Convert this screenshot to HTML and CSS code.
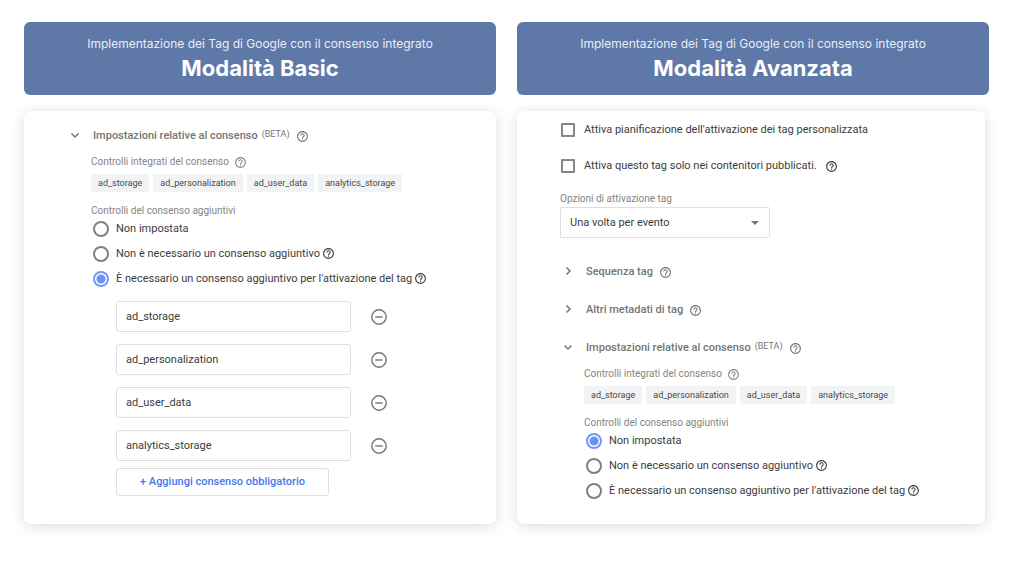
FILE: index.html
```html
<!DOCTYPE html>
<html lang="it">
<head>
<meta charset="utf-8">
<title>Modalità Basic e Modalità Avanzata</title>
<link rel="stylesheet" href="styles.css">
</head>
<body>
<svg width="0" height="0" class="sprite" aria-hidden="true">
  <symbol id="help" viewBox="0 0 24 24"><path fill="currentColor" d="M11 18h2v-2h-2v2zm1-16C6.480 2 2 6.480 2 12s4.480 10 10 10 10-4.480 10-10S17.520 2 12 2zm0 18c-4.410 0-8-3.590-8-8s3.590-8 8-8 8 3.590 8 8-3.590 8-8 8zm0-14c-2.210 0-4 1.790-4 4h2c0-1.100.9-2 2-2s2 .9 2 2c0 2-3 1.750-3 5h2c0-2.250 3-2.500 3-5 0-2.210-1.790-4-4-4z"/></symbol>
  <symbol id="down" viewBox="0 0 16 16"><path fill="none" stroke="currentColor" stroke-width="1.500" d="M4.500 5.500 8 9 11.500 5.500"/></symbol>
  <symbol id="right" viewBox="0 0 16 16"><path fill="none" stroke="currentColor" stroke-width="1.500" d="M6.500 3.500 10 7 6.500 10.500"/></symbol>
  <symbol id="minus" viewBox="0 0 16 16"><circle cx="8" cy="8" r="7.200" fill="none" stroke="currentColor" stroke-width="1.400"/><path stroke="currentColor" stroke-width="1.400" d="M4.300 8h7.400"/></symbol>
</svg>
<main class="page">
  <section class="column">
    <header class="banner">
      <p class="banner-text">Implementazione dei Tag di Google con il consenso integrato</p>
      <h1 class="banner-title">Modalità Basic</h1>
    </header>
    <div class="card">
      <button class="section-head" type="button"><svg class="chevron"><use href="#down"/></svg><span>Impostazioni relative al consenso</span><span class="beta">(BETA)</span><svg class="help"><use href="#help"/></svg></button>
      <div class="section-body">
        <p class="label">Controlli integrati del consenso <svg class="help"><use href="#help"/></svg></p>
        <ul class="chips"><li>ad_storage</li><li>ad_personalization</li><li>ad_user_data</li><li>analytics_storage</li></ul>
        <fieldset class="radios">
          <legend>Controlli del consenso aggiuntivi</legend>
          <label class="option"><input type="radio" name="basic">Non impostata</label>
          <label class="option"><input type="radio" name="basic">Non è necessario un consenso aggiuntivo<svg class="help"><use href="#help"/></svg></label>
          <label class="option"><input type="radio" name="basic" checked>È necessario un consenso aggiuntivo per l'attivazione del tag<svg class="help"><use href="#help"/></svg></label>
        </fieldset>
        <div class="consents">
          <div class="consent"><input type="text" aria-label="Consenso 1" value="ad_storage"><button type="button" aria-label="Rimuovi"><svg><use href="#minus"/></svg></button></div>
          <div class="consent"><input type="text" aria-label="Consenso 2" value="ad_personalization"><button type="button" aria-label="Rimuovi"><svg><use href="#minus"/></svg></button></div>
          <div class="consent"><input type="text" aria-label="Consenso 3" value="ad_user_data"><button type="button" aria-label="Rimuovi"><svg><use href="#minus"/></svg></button></div>
          <div class="consent"><input type="text" aria-label="Consenso 4" value="analytics_storage"><button type="button" aria-label="Rimuovi"><svg><use href="#minus"/></svg></button></div>
        </div>
        <button class="add" type="button">+ Aggiungi consenso obbligatorio</button>
      </div>
    </div>
  </section>

  <section class="column">
    <header class="banner">
      <p class="banner-text">Implementazione dei Tag di Google con il consenso integrato</p>
      <h1 class="banner-title">Modalità Avanzata</h1>
    </header>
    <div class="card card-advanced">
      <label class="check"><input type="checkbox">Attiva pianificazione dell'attivazione dei tag personalizzata</label>
      <label class="check"><input type="checkbox">Attiva questo tag solo nei contenitori pubblicati.<svg class="help"><use href="#help"/></svg></label>
      <label class="label" for="firing">Opzioni di attivazione tag</label>
      <div class="select">
        <select id="firing"><option>Una volta per evento</option></select>
        <svg class="caret" viewBox="0 0 8 4"><path fill="#757575" d="M0 0h8L4 4z"/></svg>
      </div>
      <button class="section-head closed" type="button"><svg class="chevron"><use href="#right"/></svg><span>Sequenza tag</span><svg class="help"><use href="#help"/></svg></button>
      <button class="section-head closed" type="button"><svg class="chevron"><use href="#right"/></svg><span>Altri metadati di tag</span><svg class="help"><use href="#help"/></svg></button>
      <button class="section-head" type="button"><svg class="chevron"><use href="#down"/></svg><span>Impostazioni relative al consenso</span><span class="beta">(BETA)</span><svg class="help"><use href="#help"/></svg></button>
      <div class="section-body">
        <p class="label">Controlli integrati del consenso <svg class="help"><use href="#help"/></svg></p>
        <ul class="chips"><li>ad_storage</li><li>ad_personalization</li><li>ad_user_data</li><li>analytics_storage</li></ul>
        <fieldset class="radios">
          <legend>Controlli del consenso aggiuntivi</legend>
          <label class="option"><input type="radio" name="advanced" checked>Non impostata</label>
          <label class="option"><input type="radio" name="advanced">Non è necessario un consenso aggiuntivo<svg class="help"><use href="#help"/></svg></label>
          <label class="option"><input type="radio" name="advanced">È necessario un consenso aggiuntivo per l'attivazione del tag<svg class="help"><use href="#help"/></svg></label>
        </fieldset>
      </div>
    </div>
  </section>
</main>
</body>
</html>
```
FILE: styles.css
```css
* { box-sizing: border-box; }
body { margin: 0; background: #fff; color: #3c3c3c; font: 11px/16px Roboto, sans-serif; }
p, h1, ul, fieldset { margin: 0; padding: 0; border: 0; }
button, input, select { font: inherit; color: inherit; margin: 0; }
button { background: none; border: 0; padding: 0; cursor: pointer; }
.sprite { position: absolute; }
.page { display: grid; grid-template-columns: 1fr 1fr; gap: 21px; padding: 22px 35px 38px 24px; }
.column { display: flex; flex-direction: column; gap: 16px; }
.banner { padding: 13px 16px 12px; border-radius: 6px; background: #5e78a8; color: #fff; text-align: center; font-family: Inter, sans-serif; }
.banner-text { font-size: 12px; line-height: 18px; color: #e9eef7; }
.banner-title { font-size: 22px; line-height: 30px; font-weight: 700; }
.card { flex: 1; padding: 15px 24px 28px 43px; border-radius: 7px; background: #fff; box-shadow: 0 2px 14px rgba(0, 0, 0, .14); }
.card-advanced { margin-right: 4px; padding-top: 8px; padding-bottom: 20px; }
.help { width: 13px; height: 13px; flex: none; }
.section-head { display: flex; align-items: center; height: 20px; color: #757575; font-size: 11px; font-weight: 500; }
.chevron { width: 16px; height: 16px; margin-right: 10px; }
.section-head .help { margin-left: 6px; }
.beta { margin-left: 4px; padding-bottom: 5px; font-size: 9px; font-weight: 400; }
.section-body { padding: 8px 0 0 24px; }
.label { display: flex; align-items: center; gap: 5px; color: #858585; font-size: 10px; }
.chips { display: flex; flex-wrap: wrap; gap: 4px; margin-top: 4px; list-style: none; }
.chips li { padding: 0 7px; background: #f1f3f4; font-size: 9px; line-height: 18px; color: #4a4a4a; }
.radios { margin-top: 13px; }
.radios legend { padding: 0; font-size: 10px; line-height: 11px; color: #858585; }
.option { display: flex; align-items: center; height: 25px; }
.option input { appearance: none; width: 16px; height: 16px; margin: 0 7px 0 2px; border: 2px solid #808080; border-radius: 50%; }
.option input:checked { border-color: #7598f5; background: radial-gradient(circle, #6c91f5 4px, #fff 5px); }
.option .help { margin-left: 2px; }
.consents { display: grid; gap: 12px; margin: 10px 0 7px 25px; }
.consent { display: flex; align-items: center; gap: 20px; }
.consent input { width: 235px; height: 31px; padding: 0 9px; border: 1px solid #dfdfdf; border-radius: 3px; background: #fff; }
.consent button, .consent svg { display: block; width: 16px; height: 16px; color: #757575; }
.add { height: 28px; margin-left: 25px; padding: 0 23px; border: 1px solid #dfdfdf; border-radius: 3px; color: #4678ee; font-weight: 500; }
.check { display: flex; align-items: center; height: 22px; margin-bottom: 14px; }
.check input { appearance: none; width: 14px; height: 14px; margin: 0 9px 0 1px; border: 2px solid #85888c; border-radius: 1px; }
.check .help { margin-left: 8px; }
.select { position: relative; width: 210px; margin-bottom: 24px; }
.select select { display: block; appearance: none; width: 100%; height: 31px; padding: 0 9px; border: 1px solid #dfdfdf; border-radius: 2px; background: #fff; }
.caret { position: absolute; right: 11px; top: 14px; width: 8px; height: 4px; }
.closed { margin-bottom: 18px; }
```
